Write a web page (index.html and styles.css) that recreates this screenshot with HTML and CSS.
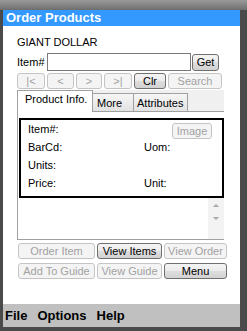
FILE: index.html
```html
<!DOCTYPE html>
<html lang="en">
  <head>
    <meta charset="UTF-8" />
    <title>Order Products</title>
    <link rel="stylesheet" href="styles.css">
  </head>
  <body>
    <main class="screen">
      <header class="titlebar">Order Products</header>
      <section class="content">
        <div class="store">GIANT DOLLAR</div>

        <div class="item-row">
          <label class="item-label" for="item-no">Item#</label>
          <input class="item-input" type="text" id="item-no" autocomplete="off" />
          <button class="btn btn-get">Get</button>
        </div>

        <div class="nav-row">
          <button class="btn nav-first" disabled>|&lt;</button>
          <button class="btn nav-prev" disabled>&lt;</button>
          <button class="btn nav-next" disabled>&gt;</button>
          <button class="btn nav-last" disabled>&gt;|</button>
          <button class="btn nav-clr">Clr</button>
          <button class="btn nav-search" disabled>Search</button>
        </div>

        <div class="tabs">
          <div class="tab tab-active">Product Info.</div>
          <div class="tab tab-more">More</div>
          <div class="tab tab-attr">Attributes</div>
          <div class="tab-fill"></div>
        </div>

        <div class="tab-panel">
          <div class="info-box">
            <span class="info-label">Item#:</span>
            <span class="info-right"><button class="btn btn-image" disabled>Image</button></span>
            <span class="info-label">BarCd:</span>
            <span class="info-label">Uom:</span>
            <span class="info-label">Units:</span>
            <span class="info-label"></span>
            <span class="info-label">Price:</span>
            <span class="info-label">Unit:</span>
          </div>
          <div class="notes">
            <div class="scrollbar">
              <span class="arrow arrow-up"></span>
              <span class="arrow arrow-down"></span>
            </div>
          </div>
        </div>

        <div class="actions">
          <button class="btn" disabled>Order Item</button>
          <button class="btn">View Items</button>
          <button class="btn" disabled>View Order</button>
          <button class="btn" disabled>Add To Guide</button>
          <button class="btn" disabled>View Guide</button>
          <button class="btn">Menu</button>
        </div>
      </section>
      <footer class="menubar">
        <span>File</span>
        <span>Options</span>
        <span>Help</span>
      </footer>
    </main>
  </body>
</html>
```

FILE: styles.css
```css
body {
  margin: 0;
  padding: 0;
  font-family: "Liberation Sans", Arial, sans-serif;
  font-size: 11px;
  color: #000;
}

.screen {
  width: 247px;
  height: 331px;
  box-sizing: border-box;
  padding: 10px 7px 4px 3px;
  display: flex;
  flex-direction: column;
  background: linear-gradient(#9a9a9a, #6e6e6e 10px, #4a4a4a 10px);
}

.titlebar {
  height: 16px;
  line-height: 16px;
  padding-left: 3px;
  background-color: #3399ff;
  color: #fff;
  font-weight: bold;
  font-size: 13px;
}

.content {
  height: 278px;
  box-sizing: border-box;
  padding: 10px 0 0 14px;
  background-color: #fff;
}

.store {
  height: 13px;
  line-height: 13px;
}

.item-row {
  display: flex;
  align-items: center;
  height: 18px;
  margin-top: 4px;
}

.item-label {
  width: 30px;
}

.item-input {
  width: 144px;
  height: 18px;
  box-sizing: border-box;
  margin: 0;
  padding: 0 2px;
  border: 1px solid #7a7a7a;
  font: inherit;
}

.btn {
  height: 16px;
  box-sizing: border-box;
  margin: 0;
  padding: 0;
  border: 1px solid #707070;
  border-radius: 3px;
  background: linear-gradient(#f4f4f4, #ebebeb 50%, #dedede 50%, #d2d2d2);
  font-family: "Liberation Sans", Arial, sans-serif;
  font-size: 11px;
  line-height: 14px;
  color: #000;
  white-space: nowrap;
}

.btn:disabled {
  border-color: #c4c4c4;
  background: #f4f4f4;
  color: #a2a2a2;
}

.btn-get {
  width: 27px;
  height: 17px;
  margin-left: 1px;
}

.nav-row {
  display: flex;
  gap: 2px;
  margin-top: 2px;
}

.nav-first { width: 28px; }
.nav-prev { width: 27px; }
.nav-next { width: 26px; }
.nav-last { width: 28px; }
.nav-clr { width: 32px; }
.nav-search { width: 54px; }

.tabs {
  display: flex;
  align-items: flex-end;
  width: 207px;
  height: 22px;
  margin-top: 1px;
  background-color: #f0f0f0;
}

.tab {
  height: 19px;
  box-sizing: border-box;
  padding: 0 4px;
  line-height: 18px;
  border: 1px solid #a0a0a0;
  border-left: none;
  background: linear-gradient(#f6f6f6, #e2e2e2);
  white-space: nowrap;
  overflow: hidden;
}

.tab-active {
  width: 76px;
  height: 22px;
  padding-left: 7px;
  border-left: 1px solid #a0a0a0;
  border-bottom: none;
  background: #fff;
  line-height: 16px;
}

.tab-more {
  width: 41px;
}

.tab-attr {
  width: 54px;
  padding: 0 3px;
}

.tab-fill {
  flex: 1;
  height: 100%;
  box-sizing: border-box;
  border-bottom: 1px solid #a0a0a0;
}

.tab-panel {
  width: 207px;
  height: 128px;
  box-sizing: border-box;
  border-left: 1px solid #a0a0a0;
  border-bottom: 1px solid #a0a0a0;
  padding: 6px 0 0 1px;
}

.info-box {
  display: grid;
  grid-template-columns: 116px 1fr;
  grid-auto-rows: 18px;
  align-items: center;
  width: 205px;
  height: 80px;
  box-sizing: border-box;
  border: 2px solid #000;
  padding-left: 7px;
}

.info-right {
  display: flex;
  justify-content: flex-end;
  padding-right: 10px;
}

.btn-image {
  width: 40px;
  margin-top: 4px;
}

.notes {
  display: flex;
  justify-content: flex-end;
  height: 41px;
}

.scrollbar {
  width: 16px;
  height: 100%;
  display: flex;
  flex-direction: column;
  align-items: center;
  gap: 10px;
  padding-top: 6px;
  box-sizing: border-box;
  background-color: #f3f3f3;
}

.arrow {
  width: 0;
  height: 0;
  border-left: 3px solid transparent;
  border-right: 3px solid transparent;
}

.arrow-up {
  border-bottom: 3px solid #a8a8a8;
}

.arrow-down {
  border-top: 3px solid #a8a8a8;
}

.actions {
  display: grid;
  grid-template-columns: 77px 65px 63px;
  grid-auto-rows: 16px;
  column-gap: 2px;
  row-gap: 4px;
  margin: 3px 0 0 1px;
}

.actions .btn {
  width: 100%;
}

.menubar {
  height: 23px;
  margin-top: auto;
  display: flex;
  align-items: center;
  gap: 10px;
  padding-left: 2px;
  background-color: #c0c0c0;
  font-weight: bold;
  font-size: 13px;
}
```
